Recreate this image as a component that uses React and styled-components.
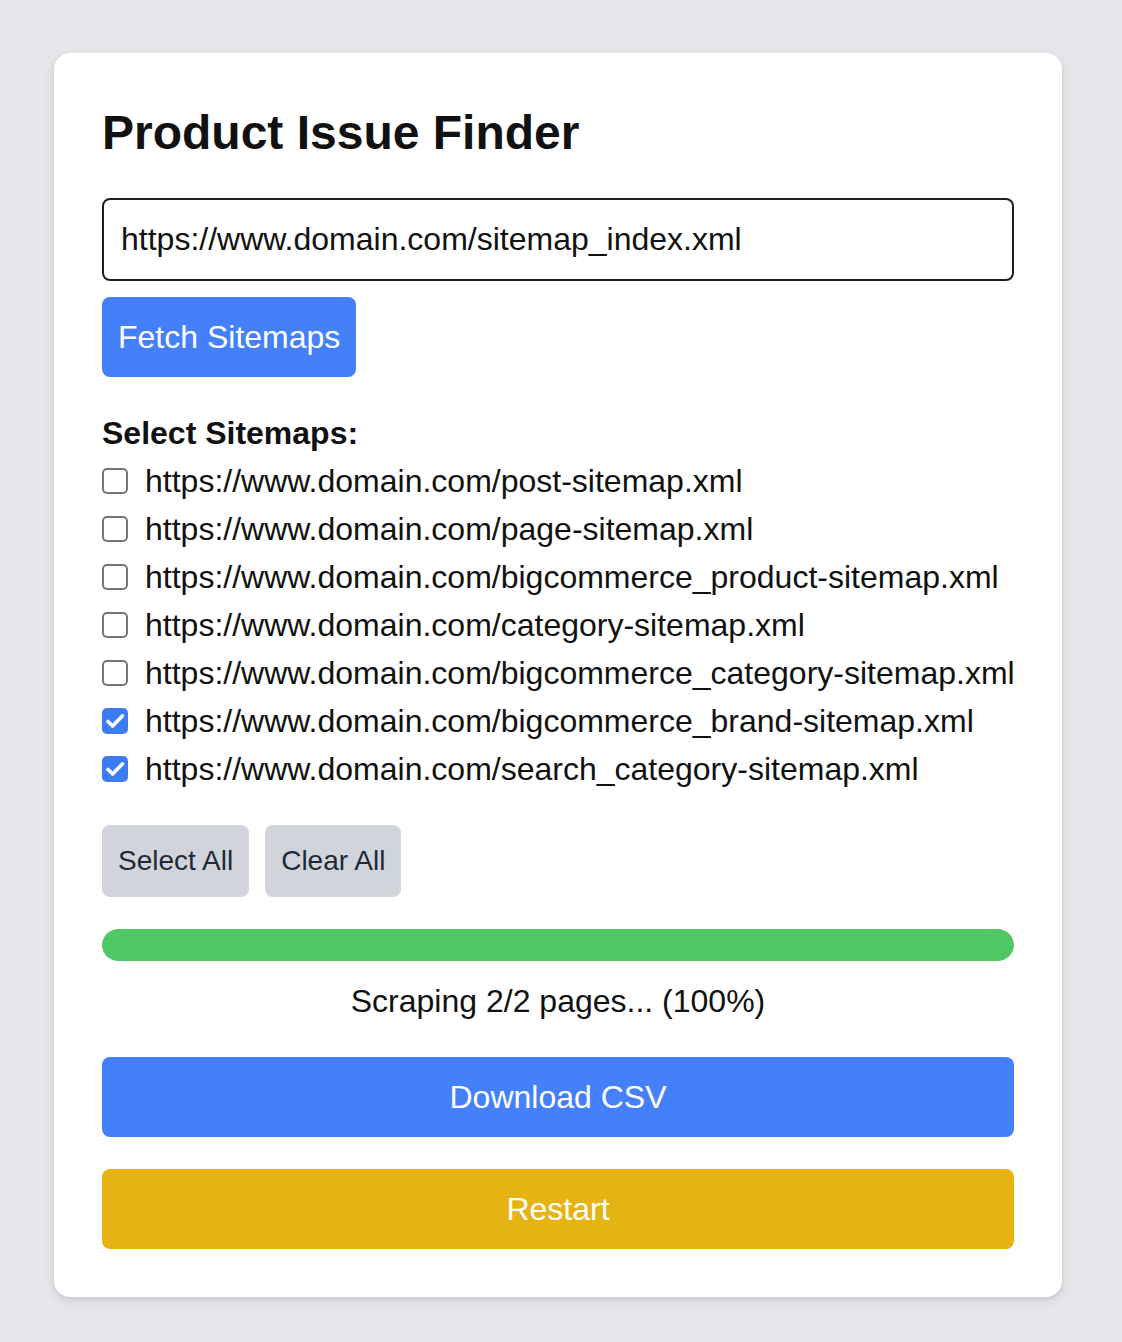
import React, { useState } from "react";
import styled, { createGlobalStyle } from "styled-components";

const GlobalStyle = createGlobalStyle`
  html, body {
    margin: 0;
    padding: 0;
    background: #e5e7eb;
    font-family: "Liberation Sans", Arial, Helvetica, sans-serif;
    color: #111;
  }
  * { box-sizing: border-box; }
`;

const Page = styled.div`
  padding: 53px 60px 45px 54px;
`;

const Card = styled.div`
  background: #fff;
  border-radius: 16px;
  padding: 48px;
  box-shadow: 0 4px 12px rgba(0, 0, 0, 0.1), 0 2px 4px rgba(0, 0, 0, 0.06);
`;

const Title = styled.h1`
  margin: 0 0 33px;
  font-size: 48px;
  line-height: 64px;
  font-weight: 700;
  color: #111;
`;

const UrlInput = styled.input`
  display: block;
  width: 100%;
  height: 83px;
  padding: 0 17px;
  border: 2px solid #1f1f1f;
  border-radius: 8px;
  font-family: inherit;
  font-size: 32px;
  color: #111;
  outline: none;
`;

const Button = styled.button`
  display: block;
  border: none;
  border-radius: 8px;
  font-family: inherit;
  font-size: 32px;
  line-height: 48px;
  padding: 16px;
  color: #fff;
  cursor: pointer;
  background: ${(p) => p.$bg};
  width: ${(p) => (p.$full ? "100%" : "auto")};
  margin-top: ${(p) => p.$mt || 0}px;
  text-align: center;
`;

const Label = styled.div`
  margin-top: 32px;
  font-size: 32px;
  line-height: 48px;
  font-weight: 700;
`;

const List = styled.div`
  display: flex;
  flex-direction: column;
`;

const Row = styled.label`
  display: flex;
  align-items: center;
  gap: 17px;
  height: 48px;
  font-size: 32px;
  white-space: nowrap;
  cursor: pointer;
`;

const Box = styled.span`
  flex: none;
  width: 26px;
  height: 26px;
  border-radius: 5px;
  display: flex;
  align-items: center;
  justify-content: center;
  background: ${(p) => (p.$checked ? "#3b7cf5" : "#fff")};
  border: ${(p) => (p.$checked ? "none" : "2px solid #767676")};
`;

const Actions = styled.div`
  display: flex;
  gap: 16px;
  margin-top: 32px;
`;

const GrayButton = styled.button`
  border: none;
  border-radius: 8px;
  background: #d1d5db;
  color: #1f2937;
  font-family: inherit;
  font-size: 28px;
  line-height: 40px;
  padding: 16px;
  cursor: pointer;
`;

const Track = styled.div`
  margin-top: 32px;
  height: 32px;
  border-radius: 16px;
  background: #e5e7eb;
  overflow: hidden;
`;

const Fill = styled.div`
  height: 100%;
  border-radius: 16px;
  background: #4fc763;
`;

const Status = styled.div`
  margin-top: 16px;
  font-size: 32px;
  line-height: 48px;
  text-align: center;
`;

const sitemaps = [
  "https://www.domain.com/post-sitemap.xml",
  "https://www.domain.com/page-sitemap.xml",
  "https://www.domain.com/bigcommerce_product-sitemap.xml",
  "https://www.domain.com/category-sitemap.xml",
  "https://www.domain.com/bigcommerce_category-sitemap.xml",
  "https://www.domain.com/bigcommerce_brand-sitemap.xml",
  "https://www.domain.com/search_category-sitemap.xml",
];

function Checkbox({ checked }) {
  return (
    <Box $checked={checked}>
      {checked && (
        <svg width="26" height="26" viewBox="0 0 26 26" fill="none">
          <path
            d="M6 13.5l4.6 4.6L20.4 8"
            stroke="#fff"
            strokeWidth="3.6"
            strokeLinecap="round"
            strokeLinejoin="round"
          />
        </svg>
      )}
    </Box>
  );
}

export default function App() {
  const [url, setUrl] = useState("https://www.domain.com/sitemap_index.xml");
  const [selected, setSelected] = useState([5, 6]);
  const done = 2;
  const total = 2;

  const toggle = (i) =>
    setSelected((s) => (s.includes(i) ? s.filter((x) => x !== i) : [...s, i]));

  return (
    <Page>
      <GlobalStyle />
      <Card>
        <Title>Product Issue Finder</Title>
        <UrlInput value={url} onChange={(e) => setUrl(e.target.value)} />
        <Button $bg="#4580fb" $mt={16}>Fetch Sitemaps</Button>

        <Label>Select Sitemaps:</Label>
        <List>
          {sitemaps.map((s, i) => (
            <Row key={s} onClick={() => toggle(i)}>
              <Checkbox checked={selected.includes(i)} />
              {s}
            </Row>
          ))}
        </List>

        <Actions>
          <GrayButton onClick={() => setSelected(sitemaps.map((_, i) => i))}>
            Select All
          </GrayButton>
          <GrayButton onClick={() => setSelected([])}>Clear All</GrayButton>
        </Actions>

        <Track>
          <Fill style={{ width: `${(done / total) * 100}%` }} />
        </Track>
        <Status>
          Scraping {done}/{total} pages... ({Math.round((done / total) * 100)}%)
        </Status>

        <Button $bg="#4580fb" $full $mt={32}>Download CSV</Button>
        <Button $bg="#e5b413" $full $mt={32}>Restart</Button>
      </Card>
    </Page>
  );
}
